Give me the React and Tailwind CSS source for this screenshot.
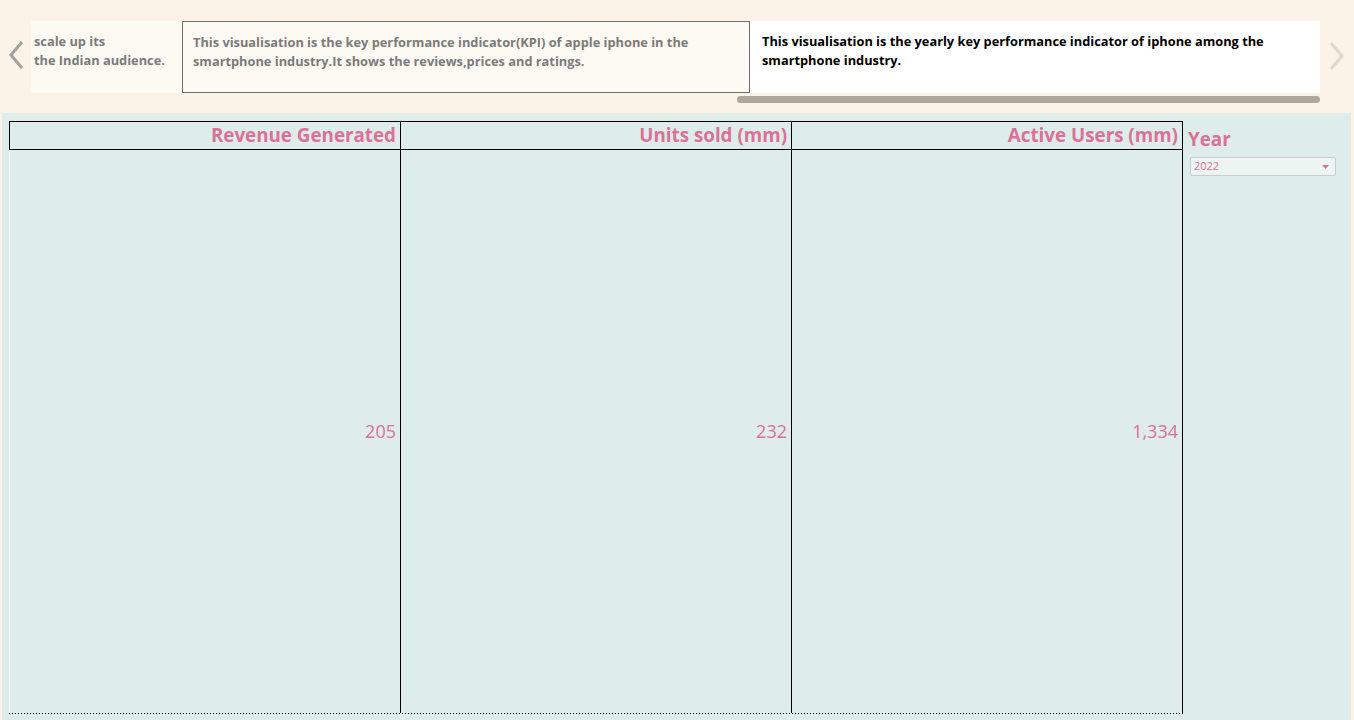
import React from 'react';

const font = { fontFamily: '"Open Sans", "Noto Sans", Arial, sans-serif' };

const cards = [
  {
    lines: ['scale up its', 'the Indian audience.'],
    className: 'w-[151px] bg-[#fdf9f3] text-[#7b7b7b] pl-[3px]',
  },
  {
    lines: [
      'This visualisation is the key performance indicator(KPI) of apple iphone in the',
      'smartphone industry.It shows the reviews,prices and ratings.',
    ],
    className: 'w-[568px] bg-[#fdf9f3] text-[#7b7b7b] border border-[#6e6e6e] pl-[10px]',
  },
  {
    lines: [
      'This visualisation is the yearly key performance indicator of iphone among the',
      'smartphone industry.',
    ],
    className: 'w-[570px] bg-white text-black pl-[12px]',
  },
];

const kpis = [
  { title: 'Revenue Generated', value: '205' },
  { title: 'Units sold (mm)', value: '232' },
  { title: 'Active Users (mm)', value: '1,334' },
];

export default function App() {
  return (
    <div className="w-[1354px] h-[720px] bg-[#fbf3e7] overflow-hidden flex flex-col" style={font}>
      {/* story point navigator */}
      <div className="h-[113px] flex shrink-0">
        <div className="w-[31px] flex items-start justify-center pt-[40px]">
          <svg width="18" height="30" viewBox="0 0 18 30">
            <path d="M15 2 L4 15 L15 28" fill="none" stroke="#a5a29d" strokeWidth="3" />
          </svg>
        </div>
        <div className="w-[1289px] pt-[21px] flex flex-col">
          <div className="flex h-[72px]">
            {cards.map((c, i) => (
              <div key={i} className={`shrink-0 pt-[11px] text-[12.8px] font-bold leading-[19px] ${c.className}`}>
                {c.lines.map((l, j) => (
                  <div key={j} className="whitespace-nowrap">{l}</div>
                ))}
              </div>
            ))}
          </div>
          <div className="flex justify-end mt-[3px]">
            <div className="w-[583px] h-[7px] rounded-full bg-[#aea79e]"></div>
          </div>
        </div>
        <div className="flex-1 flex items-start justify-center pt-[41px]">
          <svg width="18" height="30" viewBox="0 0 18 30">
            <path d="M3 2 L14 15 L3 28" fill="none" stroke="#dcd7d0" strokeWidth="3" />
          </svg>
        </div>
      </div>

      {/* dashboard */}
      <div className="flex-1 ml-[2px] mr-[3px] bg-[#dfedea] flex pl-[7px] pt-[8px]">
        <div className="w-[1174px] flex flex-col h-[593px]">
          <div className="flex h-[29px] border border-black">
            {kpis.map((k, i) => (
              <div
                key={i}
                className={`flex-1 flex items-center justify-end pr-[4px] text-[18.8px] font-bold text-[#db7198] ${i < 2 ? 'border-r border-black' : ''}`}
              >
                {k.title}
              </div>
            ))}
          </div>
          <div className="flex flex-1">
            {kpis.map((k, i) => (
              <div
                key={i}
                className={`flex-1 flex items-center justify-end pr-[4px] text-[18px] text-[#db7198] border-r border-black ${i === 0 ? 'border-l border-l-[#f4f9f8]' : ''}`}
              >
                {k.value}
              </div>
            ))}
          </div>
          <div className="h-[1px] bg-[repeating-linear-gradient(to_right,#000_0px,#000_1px,transparent_1px,transparent_3px)]"></div>
        </div>
        <div className="pl-[5px] pt-[4px]">
          <div className="text-[18.8px] font-bold text-[#db7198] leading-[28px]">Year</div>
          <div className="mt-[4px] ml-[2px] w-[146px] h-[19px] border border-[#cccccc] rounded-[2px] bg-[#edf5f3] flex items-center justify-between pl-[3px] pr-[6px]">
            <span className="text-[11px] text-[#db7198]">2022</span>
            <svg width="7" height="4" viewBox="0 0 7 4">
              <path d="M0 0 L7 0 L3.5 4 Z" fill="#db7198" />
            </svg>
          </div>
        </div>
      </div>
    </div>
  );
}
